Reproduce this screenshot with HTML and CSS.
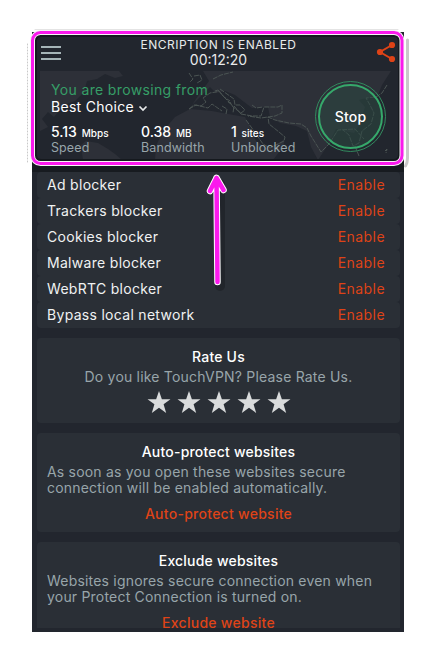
FILE: index.html
```html
<!DOCTYPE html>
<html lang="en">
<head>
    <meta charset="UTF-8">
    <meta name="viewport" content="width=device-width, initial-scale=1.0">
    <title>TouchVPN</title>
    <link rel="stylesheet" href="styles.css">
</head>
<body>
    <main class="popup">
        <header class="topbar">
            <div class="menu"><i></i><i></i><i></i></div>
            <div class="status">
                <div class="status-title">ENCRIPTION IS ENABLED</div>
                <div class="timer">00:12:20</div>
            </div>
            <svg class="share" width="20" height="22" viewBox="0 0 20 22">
                <path d="M16 4L4 11L16 18" fill="none" stroke="#df4317" stroke-width="2"/>
                <circle cx="16" cy="4" r="3.1" fill="#df4317"/>
                <circle cx="4" cy="11" r="3.1" fill="#df4317"/>
                <circle cx="16" cy="18" r="3.1" fill="#df4317"/>
            </svg>
        </header>

        <section class="connection">
            <svg class="map" width="372" height="89" viewBox="0 0 372 89">
                <path fill="#2d3038" d="M8 0H87L91 5L83 7L73 3L65 8L55 10L52 21L43 30L32 34L22 46L16 41L10 48L16 56L8 60Z"/>
                <path fill="#2d3038" d="M51 89L49 74L54 70L66 72L76 78L83 83L90 89Z"/>
                <path fill="#2d3038" d="M123 89L124 75L131 60L143 46L158 38L180 40L196 43L213 46L217 54L224 70L234 77L243 74L253 68L251 76L241 89Z"/>
                <path fill="#2d3038" d="M171 0H359L350 14L346 24L338 26L327 29L333 36L327 55L322 62L312 60L304 58L296 74L286 89L279 76L275 60L264 55L248 52L238 46L236 36L220 37L203 24L193 20L184 22L178 16L160 34L166 25L177 10Z"/>
                <g fill="none" stroke="#4b5453" stroke-width="1" stroke-dasharray="5 1">
                    <path d="M157 38L162 34L169 35L174 31L171 27L178 22L184 21L187 20L192 26L198 30M183 20L186 19L192 26L200 34L195 30M188 18L202 28L203 34L208 34L213 39L209 42L201 36L198 31"/>
                    <path d="M157 2L161 8L158 11M162 5L168 4L170 9L165 12M181 8L189 4L201 1M157 38L164 34L176 37L180 33L190 40M190 35L195 38L194 43"/>
                    <path d="M209 43L202 35L201 42M209 43L220 45L229 45L232 36L246 36L250 34V42L243 45L229 47L216 45M220 34L224 37L231 36"/>
                    <path d="M214 49L222 60L231 73L238 77L252 70L253 66L247 61L237 53L236 46L243 49L257 52L269 53L275 57L279 65L289 81L297 73L306 59L323 58L332 68"/>
                    <path d="M355 14L350 22L344 26L334 27L338 34L342 42L339 53L330 60L327 72L321 75L317 64L311 59M323 75L327 85M353 80L355 78L354 82"/>
                </g>
            </svg>
            <div class="details">
                <div class="from">You are browsing from</div>
                <div class="location">Best Choice
                    <svg width="10" height="7" viewBox="0 0 10 7"><path d="M1.5 1.5L5 5L8.5 1.5" fill="none" stroke="#e8eaeb" stroke-width="1.7"/></svg>
                </div>
                <div class="stats">
                    <div class="stat"><div class="value">5.13 <small>Mbps</small></div><div class="label">Speed</div></div>
                    <div class="stat"><div class="value">0.38 <small>MB</small></div><div class="label">Bandwidth</div></div>
                    <div class="stat"><div class="value">1 <small>sites</small></div><div class="label">Unblocked</div></div>
                </div>
            </div>
            <div class="stop"><div class="stop-inner">Stop</div></div>
        </section>

        <section class="blockers">
            <div class="blocker"><span>Ad blocker</span><a>Enable</a></div>
            <div class="blocker"><span>Trackers blocker</span><a>Enable</a></div>
            <div class="blocker"><span>Cookies blocker</span><a>Enable</a></div>
            <div class="blocker"><span>Malware blocker</span><a>Enable</a></div>
            <div class="blocker"><span>WebRTC blocker</span><a>Enable</a></div>
            <div class="blocker"><span>Bypass local network</span><a>Enable</a></div>
        </section>

        <section class="card rate">
            <h2>Rate Us</h2>
            <p>Do you like TouchVPN? Please Rate Us.</p>
            <div class="stars">
                <svg viewBox="0 0 24 23"><path d="M12 0L15 8.5H24L16.8 13.8L19.5 23L12 17.4L4.5 23L7.2 13.8L0 8.5H9Z"/></svg>
                <svg viewBox="0 0 24 23"><path d="M12 0L15 8.5H24L16.8 13.8L19.5 23L12 17.4L4.5 23L7.2 13.8L0 8.5H9Z"/></svg>
                <svg viewBox="0 0 24 23"><path d="M12 0L15 8.5H24L16.8 13.8L19.5 23L12 17.4L4.5 23L7.2 13.8L0 8.5H9Z"/></svg>
                <svg viewBox="0 0 24 23"><path d="M12 0L15 8.5H24L16.8 13.8L19.5 23L12 17.4L4.5 23L7.2 13.8L0 8.5H9Z"/></svg>
                <svg viewBox="0 0 24 23"><path d="M12 0L15 8.5H24L16.8 13.8L19.5 23L12 17.4L4.5 23L7.2 13.8L0 8.5H9Z"/></svg>
            </div>
        </section>

        <section class="card auto">
            <h2>Auto-protect websites</h2>
            <p>As soon as you open these websites secure<br>connection will be enabled automatically.</p>
            <a>Auto-protect website</a>
        </section>

        <section class="card exclude">
            <h2>Exclude websites</h2>
            <p>Websites ignores secure connection even when<br>your Protect Connection is turned on.</p>
            <a>Exclude website</a>
        </section>
    </main>

    <!-- highlight frame and arrow over the popup -->
    <svg class="callout" width="436" height="664" viewBox="0 0 436 664">
        <g fill="none" stroke-linejoin="round" stroke-linecap="round">
            <path d="M407.500 40V158Q407.500 163 405.500 166" stroke="#c9c9c9" stroke-width="3"/>
            <path d="M27.500 44V162" stroke="#c9c9c9" stroke-width="1" stroke-dasharray="1 2"/>
            <path d="M35 29.500H398" stroke="#e4e4e4" stroke-width="1"/>
            <rect x="35" y="35" width="365" height="126" rx="6" stroke="#15191e" stroke-width="4"/>
            <rect x="32.500" y="32.500" width="369.500" height="131" rx="8" stroke="#f5f5f5" stroke-width="5"/>
            <rect x="32.500" y="32.500" width="369.500" height="131" rx="8" stroke="#fb19ed" stroke-width="3"/>
            <path d="M220 184V286" stroke="#171b20" stroke-width="10" opacity=".5"/>
            <path d="M217.500 282L216.500 178M210 191L216.500 178L223.500 190" stroke="#fff" stroke-width="6.500"/>
            <path d="M217.500 282L216.500 178M210 191L216.500 178L223.500 190" stroke="#fb19ed" stroke-width="4.500"/>
        </g>
    </svg>
</body>
</html>
```
FILE: styles.css
```css
* {
    box-sizing: border-box;
}
body {
    margin: 0;
    padding: 32px;
    background: #fff;
    font-family: Inter, "Liberation Sans", sans-serif;
    font-size: 14px;
}
.popup {
    width: 372px;
    height: 600px;
    overflow: hidden;
    background: #22262e;
    border-bottom: 4px solid #22262e;
    color: #fff;
}
.topbar {
    display: flex;
    justify-content: space-between;
    height: 39px;
    padding: 5px 8px 0 9px;
}
.menu {
    display: flex;
    flex-direction: column;
    gap: 4px;
    width: 20px;
    padding-top: 9px;
}
.menu i {
    height: 2px;
    background: #a6b5b8;
}
.status {
    text-align: center;
}
.status-title {
    font-size: 12px;
    letter-spacing: 0.5px;
    line-height: 15px;
    color: #e8eaeb;
}
.timer {
    line-height: 16px;
    color: #e8eaeb;
}
.share {
    margin-top: 4px;
}
.connection {
    display: flex;
    justify-content: space-between;
    position: relative;
    height: 101px;
    padding: 9px 18px 0 19px;
    border-bottom: 12px solid #171b20;
}
.map {
    position: absolute;
    left: 0;
    top: 0;
}
.details {
    position: relative;
}
.from {
    color: #369e67;
    line-height: 20px;
    letter-spacing: 0.35px;
}
.location {
    line-height: 13px;
    letter-spacing: 0.3px;
}
.stats {
    display: flex;
    margin-top: 11px;
}
.stat {
    width: 90px;
}
.stat:last-child {
    width: 70px;
}
.value {
    line-height: 15px;
    font-weight: 500;
    white-space: nowrap;
}
.value small {
    margin-left: 1px;
    font-size: 10px;
}
.label {
    color: #98a5aa;
    font-size: 12.5px;
    letter-spacing: 0.1px;
    line-height: 13px;
}
.stop {
    position: relative;
    flex: none;
    width: 71px;
    height: 71px;
    margin-top: 1px;
    padding: 2px;
    border: 1.5px solid #328a5e;
    border-radius: 50%;
}
.stop-inner {
    height: 100%;
    border: 2px solid #36a96b;
    border-radius: 50%;
    background: rgba(44, 73, 66, 0.55);
    font-weight: 500;
    letter-spacing: 0.2px;
    line-height: 62px;
    text-align: center;
}
.blockers {
    margin: 0 4px 10px 5px;
}
.blocker {
    display: flex;
    justify-content: space-between;
    height: 26px;
    padding: 0 15px 0 10px;
    border-radius: 4px;
    background: #2a2f36;
    line-height: 26px;
    letter-spacing: 0.3px;
    color: #f0f2f2;
}
.blocker a {
    color: #df4317;
    letter-spacing: 0.45px;
}
.card {
    margin: 0 4px 10px 5px;
    padding: 10px 10px 0;
    border-radius: 4px;
    background: #2a2f36;
    text-align: center;
}
.card h2 {
    margin: 0 0 4px;
    font-size: 14px;
    font-weight: 500;
    letter-spacing: 0.2px;
    line-height: 17px;
}
.card p {
    margin: 0;
    color: #98a5aa;
    letter-spacing: 0.2px;
    line-height: 16px;
    text-align: left;
}
.card a {
    display: block;
    margin-top: 9px;
    color: #df4317;
    font-weight: 500;
    letter-spacing: 0.27px;
    line-height: 17px;
}
.rate {
    height: 85px;
}
.card.rate p {
    text-align: center;
}
.stars {
    display: flex;
    justify-content: center;
    gap: 6px;
    margin-top: 6px;
}
.stars svg {
    width: 24px;
    height: 22px;
    fill: #d9dbdc;
}
.auto {
    height: 99px;
}
.exclude {
    height: 105px;
}
.callout {
    position: absolute;
    left: 0;
    top: 0;
}
```
